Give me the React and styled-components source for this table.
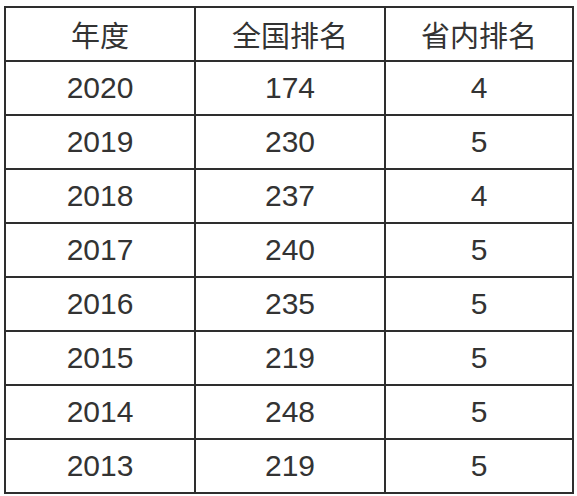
import React from "react";
import styled, { createGlobalStyle } from "styled-components";

const Global = createGlobalStyle`
  html, body { margin: 0; padding: 0; background: #fff; }
  body { font-family: "Liberation Sans", "Noto Sans CJK SC", sans-serif; }
`;

const Table = styled.div`
  display: grid;
  grid-template-columns: 188px 188px 186px;
  grid-auto-rows: 52px;
  gap: 2px;
  padding: 2px;
  background: #2e2e2e;
  width: max-content;
  margin: 6px 0 0 4px;
`;

const Cell = styled.div`
  background: #fff;
  display: flex;
  align-items: center;
  justify-content: center;
  color: #333;
  font-size: ${(p) => (p.$head ? "29px" : "30px")};
  font-family: ${(p) =>
    p.$head
      ? '"Noto Sans CJK SC", sans-serif'
      : '"Liberation Sans", "Noto Sans CJK SC", sans-serif'};
  font-weight: 400;
`;

const head = ["年度", "全国排名", "省内排名"];
const rows = [
  ["2020", "174", "4"],
  ["2019", "230", "5"],
  ["2018", "237", "4"],
  ["2017", "240", "5"],
  ["2016", "235", "5"],
  ["2015", "219", "5"],
  ["2014", "248", "5"],
  ["2013", "219", "5"],
];

export default function App() {
  return (
    <>
      <Global />
      <Table>
        {head.map((h) => (
          <Cell key={h} $head>
            {h}
          </Cell>
        ))}
        {rows.map((r) =>
          r.map((v, i) => <Cell key={r[0] + i}>{v}</Cell>)
        )}
      </Table>
    </>
  );
}
